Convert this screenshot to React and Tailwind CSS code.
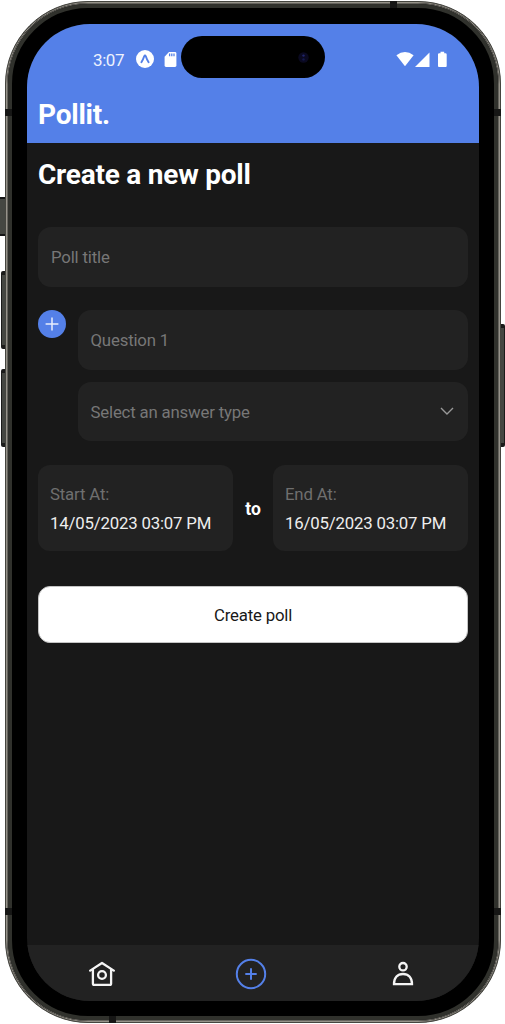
import React from "react";

const field = "flex items-center rounded-[13px] bg-[#222222] text-[16.8px] tracking-[-0.18px] text-[#777777]";

function ExpoMark() {
  return (
    <svg className="ml-[12px] size-[18px]" viewBox="0 0 18 18">
      <circle cx="9" cy="9" r="9" fill="#fff" />
      <path d="M5.4 12.2C6.6 10.3 7.7 7.9 8.2 6.3Q9 4.6 9.8 6.3C10.3 7.9 11.4 10.3 12.6 12.2" fill="none" stroke="#5480e8" strokeWidth="1.9" strokeLinecap="round" />
    </svg>
  );
}

function StatusBar() {
  return (
    <div className="flex h-[70px] items-center pl-[66px] pr-[31px] text-[17px] text-white">
      <span className="w-[31px] whitespace-nowrap pt-[2px] leading-none tracking-[-0.4px] text-[#eef2fd]">3:07</span>
      <ExpoMark />
      <svg className="ml-[10px] h-[15px] w-[13px]" viewBox="0 0 13 15">
        <path d="M5 0H11Q12.4 0 12.4 1.4V13.6Q12.4 15 11 15H2Q.6 15 .6 13.6V4.7Z" fill="#fff" />
        <path d="M5.6 1.6V4.2M7.8 1.6V4.2M10 1.6V4.2" stroke="#5480e8" strokeWidth="1.3" />
      </svg>
      <svg className="ml-auto h-[17px] w-[52px]" viewBox="0 0 52 17">
        <path d="M.4 4.2Q9 -2.2 17.6 4.2L9 15.2Z" fill="#fff" />
        <path d="M19 16L33.5 1.5V16Z" fill="#fff" />
        <path d="M44.5 .8H48.2V2.2H49.5Q50.7 2.2 50.7 3.4V15Q50.7 16 49.7 16H43Q42 16 42 15V3.4Q42 2.2 43.2 2.2H44.5Z" fill="#fff" />
      </svg>
    </div>
  );
}

function Island() {
  return (
    <div className="absolute left-[154px] top-[12px] flex h-[42px] w-[144px] items-center justify-end rounded-full bg-black pr-[16px]">
      <svg className="size-[11px]" viewBox="0 0 11 11">
        <circle cx="5.5" cy="5.5" r="5.2" fill="#0a0920" />
        <circle cx="5.5" cy="3.6" r="1.2" fill="#21256b" />
        <circle cx="5.5" cy="7.4" r="1.2" fill="#14194c" />
      </svg>
    </div>
  );
}

function DateCard({ label, value }) {
  return (
    <div className="flex h-[86px] w-[195px] flex-col justify-center rounded-[12px] bg-[#222222] pl-[12px] text-[16.8px] tracking-[-0.18px]">
      <div className="h-[29px] leading-[29px] text-[#6f6f6f]">{label}</div>
      <div className="h-[28px] whitespace-nowrap leading-[28px] text-[#eeeeee]">{value}</div>
    </div>
  );
}

function Form() {
  return (
    <main className="flex flex-1 flex-col px-[11px]">
      <h1 className="mt-[14px] text-[28px] font-bold leading-[36px] tracking-[-0.23px] text-white">Create a new poll</h1>
      <div className={`${field} mt-[34px] h-[60px] pl-[13px] pt-[1px]`}>Poll title</div>
      <div className="mt-[23px] flex gap-[12px]">
        <button className="flex size-[28px] items-center justify-center rounded-full bg-[#5480e8]">
          <svg className="size-[14px]" viewBox="0 0 14 14"><path d="M7 .6V13.4M.6 7H13.4" stroke="#e7edfc" strokeWidth="1.5" /></svg>
        </button>
        <div className="flex flex-1 flex-col gap-[12px]">
          <div className={`${field} h-[59.5px] pl-[12.5px] pt-[1px]`}>Question 1</div>
          <div className={`${field} h-[59.5px] justify-between pl-[12.5px] pr-[14.5px]`}>
            <span className="pt-[2px]">Select an answer type</span>
            <svg className="h-[8px] w-[14px]" viewBox="0 0 14 8"><path d="M1 1L7 7L13 1" fill="none" stroke="#999" strokeWidth="1.4" /></svg>
          </div>
        </div>
      </div>
      <div className="mt-[24px] flex items-center justify-between">
        <DateCard label="Start At:" value="14/05/2023 03:07 PM" />
        <span className="pt-[3px] text-[17.5px] font-bold text-white">to</span>
        <DateCard label="End At:" value="16/05/2023 03:07 PM" />
      </div>
      <button className="mt-[35px] h-[57px] rounded-[12px] border border-[#c4c4c4] bg-white pt-[3px] text-[16.8px] tracking-[-0.18px] text-[#181818]">Create poll</button>
    </main>
  );
}

function TabBar() {
  return (
    <nav className="flex h-[56px] items-center bg-[#222222] pl-[62px] pt-[2px]">
      <svg className="h-[26px] w-[26px]" viewBox="0 0 26 26" fill="none" stroke="#f5f5f5" strokeWidth="2.3" strokeLinejoin="round" strokeLinecap="round">
        <path d="M1.2 9.6L13 2L24.8 9.6M3.9 8.6V22.4Q3.9 23.8 5.2 23.8H20.8Q22.1 23.8 22.1 22.4V8.6" />
        <circle cx="13" cy="14" r="3.9" />
      </svg>
      <svg className="ml-[120px] size-[32px]" viewBox="0 0 32 32" fill="none" stroke="#5480e8" strokeWidth="2">
        <circle cx="16" cy="16" r="14.2" />
        <path d="M16 10.3V21.7M10.3 16H21.7" />
      </svg>
      <svg className="ml-[125px] h-[26px] w-[22px]" viewBox="0 0 22 26" fill="none" stroke="#f5f5f5" strokeWidth="2.3">
        <circle cx="11" cy="5.7" r="3.7" />
        <path d="M2 23.1C2 16.7 5.6 13 11 13S20 16.7 20 23.1Z" />
      </svg>
    </nav>
  );
}

export default function App() {
  return (
    <div className="relative h-[1024px] w-[505px] overflow-hidden bg-white pl-[5px] pt-[1px] font-[Roboto,sans-serif]">
      <div className="absolute left-0 top-[197px] h-[39px] w-[7px] border-y-2 border-[#151515] bg-[#454742]" />
      <div className="absolute left-[1px] top-[271px] h-[78px] w-[6px] rounded-l-[2px] border-y-4 border-l border-[#1b1b1a] bg-[#454742]" />
      <div className="absolute left-[1px] top-[369px] h-[78px] w-[6px] rounded-l-[2px] border-y-4 border-l border-[#1b1b1a] bg-[#454742]" />
      <div className="absolute left-[499px] top-[324px] h-[123px] w-[6px] rounded-r-[2px] border-y-4 border-r border-[#1b1b1a] bg-[#454742]" />
      <div className="relative h-[1022px] w-[496px] rounded-[83px] border border-[#45453f] bg-[#111111]">
        <div className="h-full rounded-[82px] border border-[#96938a]">
          <div className="h-full rounded-[81px] border border-[#66645e]">
            <div className="h-full rounded-[80px] border-4 border-[#30312c] bg-black px-[15px] pb-[15px] pt-[16px]">
              <div className="relative flex h-full flex-col overflow-hidden rounded-[63px] bg-[#181818]">
                <header className="h-[119px] shrink-0 bg-[#5480e8]">
                  <StatusBar />
                  <div className="pl-[11px] pt-[1px] text-[28px] font-bold leading-[40px] tracking-[-0.23px] text-white">Pollit.</div>
                </header>
                <Island />
                <Form />
                <TabBar />
              </div>
            </div>
          </div>
        </div>
        <div className="absolute -left-px top-[107px] h-[7px] w-[7px] bg-[#161615]" />
        <div className="absolute -right-px top-[107px] h-[7px] w-[7px] bg-[#161615]" />
        <div className="absolute -left-px top-[906px] h-[7px] w-[7px] bg-[#161615]" />
        <div className="absolute -right-px top-[906px] h-[7px] w-[7px] bg-[#161615]" />
        <div className="absolute left-[384px] -top-px h-[7px] w-[7px] bg-[#161615]" />
        <div className="absolute left-[103px] -bottom-px h-[7px] w-[7px] bg-[#161615]" />
      </div>
    </div>
  );
}
